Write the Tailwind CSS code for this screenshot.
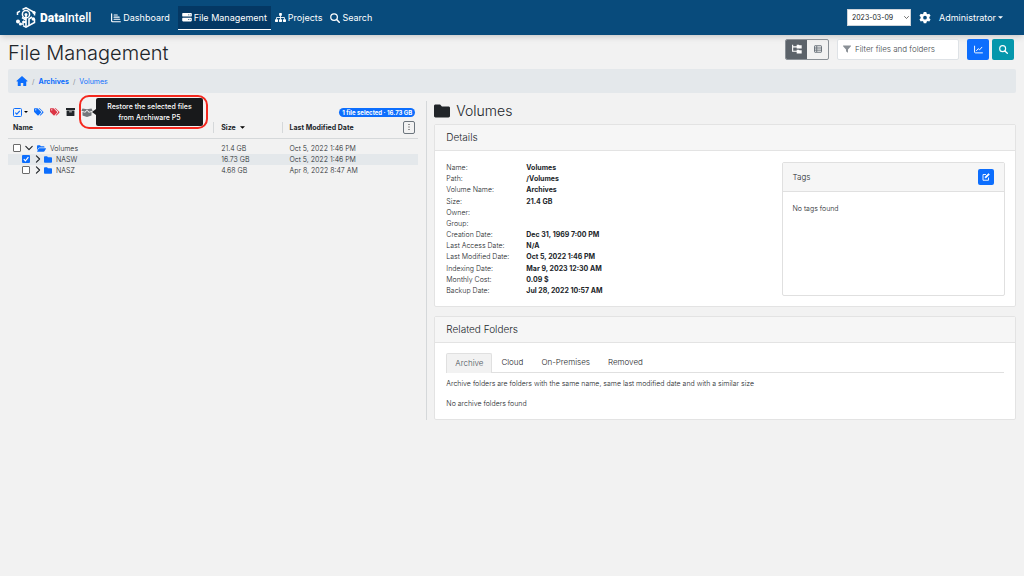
<!DOCTYPE html>
<html lang="en">
<head>
<meta charset="utf-8">
<title>File Management - DataIntell</title>
<script src="https://cdn.jsdelivr.net/npm/@tailwindcss/browser@4"></script>
</head>
<body class="min-h-screen bg-[#f2f2f2] font-['Inter',sans-serif] text-[7px] leading-[11px] font-light text-[#212529]">
<svg class="hidden">
  <symbol id="folder" viewBox="0 0 16 14"><path d="M1.5 0.5h4.6l1.8 1.9h6.6c.8 0 1.5.6 1.5 1.4v8.3c0 .8-.7 1.4-1.5 1.4h-13C.7 13.500 0 12.900 0 12.100V1.900C0 1.100.7.5 1.500.5z"/></symbol>
  <symbol id="folder-open" viewBox="0 0 18 14"><path d="M0 10.500V2C0 1.100.7.500 1.500.5H6l1.800 1.800h5.700c.8 0 1.500.7 1.500 1.500v1.200H5c-.9 0-1.700.5-2.200 1.200z"/><path d="M4.800 6.300h12.500c.6 0 .9.600.6 1.100l-3 5.200c-.3.500-.8.900-1.400.9H1c-.6 0-.9-.6-.6-1.100l3-5.200c.3-.5.800-.9 1.400-.9z"/></symbol>
  <symbol id="search" viewBox="0 0 16 16"><circle cx="6.500" cy="6.500" r="5.300" fill="none" stroke="currentColor" stroke-width="2"/><path d="M10.500 10.500l4.300 4.300" stroke="currentColor" stroke-width="2.400" stroke-linecap="round"/></symbol>
  <symbol id="tags" viewBox="0 0 20 16"><path d="M0 1.500v5.300c0 .4.200.8.400 1.100l6.600 6.600c.6.600 1.500.6 2.100 0l5-5c.6-.6.600-1.500 0-2.100L7.600.8C7.300.500 6.900.300 6.500.3h-5C.700.300 0 .700 0 1.500zM3.500 2.300a1.400 1.400 0 1 1 0 2.800 1.400 1.400 0 0 1 0-2.800z" fill-rule="evenodd"/><path d="M9 .3h1.800c.4 0 .8.200 1.100.5l6.700 6.600c.6.600.6 1.500 0 2.100l-5 5c-.6.600-1.500.600-2.100 0l-.2-.2 4.600-4.600c.9-.9.900-2.200 0-3.100z"/></symbol>
  <symbol id="chev" viewBox="0 0 10 10"><path d="M3 1l4 4-4 4" fill="none" stroke="currentColor" stroke-width="1.400" stroke-linecap="round" stroke-linejoin="round"/></symbol>
</svg>

<nav class="flex h-[35px] items-center bg-[#084b7c] pr-[21px] pl-4 text-[9px] font-normal text-white shadow-md" aria-label="Main">
  <a href="#" class="flex items-center gap-1">
    <svg class="h-[21px] w-5" viewBox="0 0 20 21" fill="none" stroke="white" stroke-width="1.500">
      <path d="M6.500 2.500L10 .800l8.500 4.700v3M18.500 12v3.500L10 20.200l-3-1.600M1.500 8V5.500L4 4.100M1.500 15.500v-2"/>
      <circle cx="10" cy="7.200" r="3.600"/>
      <path d="M10 8v11M10 13l-4-2.500M7 18v-4M13 18v-6l3-2M10 16l-3-2" stroke-width="1.600"/>
      <g fill="white" stroke="none"><circle cx="10" cy="7.500" r="1.500"/><circle cx="2" cy="14.500" r="2"/><circle cx="18" cy="5.500" r="1.600"/><circle cx="17.300" cy="12" r="1.800"/><circle cx="4.500" cy="17" r="1.600"/></g>
    </svg>
    <span class="font-['Roboto',sans-serif] text-[12px] leading-5 font-medium"><b class="font-black">Data</b>Intell</span>
  </a>
  <div class="ml-4 flex h-6 gap-1">
    <a href="#" class="flex items-center gap-0.5 px-1">
      <svg class="size-[10px]" viewBox="0 0 16 16" fill="none" stroke="currentColor" stroke-width="1.900" stroke-linecap="round"><path d="M1 1.500v11c0 .8.500 1.500 1.500 1.500H15M5 3.200h5M5 6.600h8M5 10h9"/></svg>
      Dashboard</a>
    <a href="#" class="flex items-center gap-0.5 border-b border-white bg-[#043864] px-1" aria-current="page">
      <svg class="h-[9px] w-[10px]" viewBox="0 0 16 15" fill="currentColor"><path fill-rule="evenodd" d="M1.500 0h13C15.300 0 16 .7 16 1.500v3c0 .8-.7 1.500-1.500 1.500h-13C.7 6 0 5.300 0 4.500v-3C0 .7.700 0 1.500 0zM10 2.300v1.400h1.400V2.300zM12.600 2.300v1.400H14V2.300zM1.500 8h13c.8 0 1.500.7 1.500 1.500v3c0 .8-.7 1.500-1.500 1.500h-13C.7 14 0 13.300 0 12.500v-3C0 8.700.700 8 1.500 8zM10 10.300v1.400h1.400v-1.400zM12.600 10.300v1.400H14v-1.400z"/></svg>
      File Management</a>
    <a href="#" class="flex items-center gap-0.5 pr-1">
      <svg class="h-[9px] w-[11px]" viewBox="0 0 20 16" fill="currentColor"><rect x="7.500" y="0" width="5" height="5" rx="1"/><rect x="0" y="11" width="5.500" height="5" rx="1"/><rect x="7.300" y="11" width="5.500" height="5" rx="1"/><rect x="14.500" y="11" width="5.500" height="5" rx="1"/><path d="M10 4v8M2.800 12V8h14.400v4" fill="none" stroke="currentColor" stroke-width="1.600"/></svg>
      Projects</a>
    <a href="#" class="flex items-center gap-0.5"><svg class="size-[10px]"><use href="#search"/></svg>Search</a>
  </div>
  <div class="ml-auto flex items-center">
    <div class="relative">
      <select aria-label="Snapshot date" class="block h-[17px] w-16 appearance-none border border-[#ced4da] bg-white pl-1 text-[7px] text-[#212529]"><option>2023-03-09</option></select>
      <svg class="pointer-events-none absolute top-1.5 right-0.5 size-[5px] rotate-90 text-[#333]"><use href="#chev"/></svg>
    </div>
    <button type="button" aria-label="Settings" class="ml-2">
      <svg class="block size-3" viewBox="0 0 16 16" fill="white"><path fill-rule="evenodd" d="M6.300 0h3.400l.5 2.100 1.300.8 2.200-.7 1.700 2.900-1.600 1.600v1.600l1.600 1.600-1.700 2.900-2.200-.7-1.300.8-.5 2.100H6.300l-.5-2.100-1.300-.8-2.200.7L.6 9.900l1.600-1.600V6.700L.6 5.100l1.700-2.900 2.200.7 1.300-.8zM8 5a2.500 2.500 0 1 0 0 5 2.500 2.500 0 0 0 0-5z"/></svg>
    </button>
    <button type="button" class="ml-2 flex items-center gap-0.5">Administrator<svg class="h-[3px] w-[5px]" viewBox="0 0 4 2" fill="white"><path d="M0 0h4L2 2z"/></svg></button>
  </div>
</nav>

<main class="px-2">
  <header class="flex h-[34px] items-center">
    <h1 class="pt-0.5 text-[20px] leading-6">File Management</h1>
    <div class="mr-0.5 mb-1.5 ml-auto flex h-[21px] items-stretch">
      <div class="flex w-11 overflow-hidden rounded-xs border border-[#8a9096]" role="group" aria-label="View">
        <button type="button" aria-label="Tree view" class="grid flex-1 place-items-center bg-[#5c636a] text-white"><svg class="size-[10px]" viewBox="0 0 16 16" fill="currentColor"><path d="M1 1v10.500h7M1 4.500h7" fill="none" stroke="currentColor" stroke-width="1.800"/><path d="M7.500 1H11l1 1h3.500v5h-8zM7.500 9H11l1 1h3.500v5h-8z"/></svg></button>
        <button type="button" aria-label="List view" class="grid flex-1 place-items-center text-[#6c757d]"><svg class="size-2" viewBox="0 0 16 16" fill="none" stroke="currentColor" stroke-width="2"><rect x="1" y="1.500" width="14" height="13" rx="1"/><path d="M1 6h14M1 10.300h14M5.500 2v12"/></svg></button>
      </div>
      <label class="ml-2 flex w-[122px] items-center gap-1 rounded-xs border border-[#dee2e6] bg-white px-[5px]">
        <svg class="size-2 shrink-0" viewBox="0 0 16 16" fill="#8a9096"><path d="M.8 1h14.400c.7 0 1 .8.6 1.300L10 9v5.300c0 .6-.6.900-1.100.6L6.500 13c-.3-.2-.5-.500-.5-.8V9L.2 2.300C-.2 1.800.1 1 .8 1z"/></svg>
        <input type="text" aria-label="Filter files and folders" placeholder="Filter files and folders" class="w-full min-w-0 bg-transparent text-[8px] outline-none placeholder:text-[#40464c]">
      </label>
      <button type="button" aria-label="Charts" class="ml-2 grid w-[22px] place-items-center rounded-xs bg-[#0d6efd] text-white"><svg class="size-[9px]" viewBox="0 0 16 16" fill="none" stroke="currentColor" stroke-width="1.700" stroke-linecap="round" stroke-linejoin="round"><path d="M1 2v10.500c0 .8.500 1.500 1.500 1.500H15M4.500 10l3-3.500 2.500 2L14 4"/></svg></button>
      <button type="button" aria-label="Search" class="ml-[3px] grid w-[22px] place-items-center rounded-xs bg-[#0597ac] text-white"><svg class="size-[9px]"><use href="#search"/></svg></button>
    </div>
  </header>

  <nav aria-label="Breadcrumb" class="flex h-6 items-center gap-1 rounded-xs bg-[#e4e8eb] px-2 text-[#0d6efd]">
    <a href="#" aria-label="Home"><svg class="block h-[10px] w-3" viewBox="0 0 18 16" fill="currentColor"><path d="M9 0l9 7.800-.7 1H15.800V15c0 .6-.4 1-1 1H11v-5H7v5H3.200c-.6 0-1-.4-1-1V8.800H.7L0 7.800z"/></svg></a>
    <span class="text-[#6c757d]">/</span><a href="#" class="font-bold">Archives</a><span class="text-[#6c757d]">/</span><a href="#" class="font-normal">Volumes</a>
  </nav>

  <div class="mt-2 flex">
    <section class="w-[41.5%] pt-[3px] pr-2" aria-label="Files">
      <div class="relative mb-px flex h-4 items-center pl-[5px]">
        <button type="button" aria-label="Select" class="flex items-center gap-0.5"><svg class="size-[9px]" viewBox="0 0 9 9" fill="none"><rect x=".5" y=".5" width="8" height="8" rx="1" stroke="#0d6efd"/><path d="M2.300 4.600l1.500 1.500 3-3.200" stroke="#0d6efd" stroke-width="1.200"/></svg><svg class="h-0.5 w-1" viewBox="0 0 4 2"><path d="M0 0h4L2 2z"/></svg></button>
        <button type="button" aria-label="Add tags" class="ml-1.5 text-[#0d6efd]"><svg class="block h-2 w-[10px]" fill="currentColor"><use href="#tags"/></svg></button>
        <button type="button" aria-label="Remove tags" class="ml-1.5 text-[#dc3545]"><svg class="block h-2 w-[10px]" fill="currentColor"><use href="#tags"/></svg></button>
        <button type="button" aria-label="Archive" class="ml-1.5"><svg class="block h-2 w-[9px]" viewBox="0 0 16 14" fill="#212529"><path fill-rule="evenodd" d="M.5 0h15c.3 0 .5.200.5.5V3.500H0V.5C0 .2.200 0 .5 0zM1 4.500h14V13c0 .6-.4 1-1 1H2c-.6 0-1-.4-1-1zM5.500 6v1.500h5V6z"/></svg></button>
        <button type="button" aria-label="Restore" aria-describedby="restore-tip" class="ml-1.5"><svg class="block h-[9px] w-3" viewBox="0 0 20 16" fill="#73777b"><path d="M2 1l8 1.300L18 1l2 4-6 1.800L10 3.200 6 6.800 0 5zM2 7l4.600 1.400L10 5l3.400 3.400L18 7v6.200L10 15.800 2 13.200z"/></svg></button>
        <div class="absolute -top-[9px] left-[71px] flex h-[34px] w-[129px] items-center rounded-[10px] border-2 border-[#f5281e] pr-[3px] pl-[11px]">
          <svg class="h-1.5 w-1 shrink-0" viewBox="0 0 4 6"><path d="M4 0v6L0 3z" fill="#18191b"/></svg>
          <div id="restore-tip" role="tooltip" class="flex-1 rounded-xs bg-[#18191b] py-[3px] text-center font-medium text-white">Restore the selected files<br>from Archiware P5</div>
        </div>
        <span class="mr-[3px] ml-auto rounded-full bg-[#0d6efd] px-[3px] text-[6px] leading-[9px] font-bold text-white">1 file selected · 16.73 GB</span>
      </div>
      <table class="w-full table-fixed border-collapse">
        <thead>
          <tr class="h-[17px] border-b border-[#d5d8da] text-left">
            <th class="w-1/2 pb-1 pl-[5px]">Name</th>
            <th class="w-1/6 pb-1"><div class="flex items-center gap-1 border-l border-[#d5d8da] pl-[7px]">Size<svg class="h-[3px] w-[5px]" viewBox="0 0 4 2"><path d="M0 0h4L2 2z"/></svg></div></th>
            <th class="w-1/3 pb-1"><div class="flex items-center justify-between border-l border-[#d5d8da] pr-[3px] pl-[7px]">Last Modified Date<button type="button" aria-label="Columns" class="-my-px grid h-[13px] w-3 place-items-center rounded-xs border border-[#6c757d]"><svg class="h-2 w-0.5" viewBox="0 0 2 8" fill="#333"><path d="M.5 1h1v1h-1zM.5 3.500h1v1h-1zM.5 6h1v1h-1z"/></svg></button></div></th>
          </tr>
        </thead>
        <tbody>
          <tr class="h-[15px]">
            <td class="pt-1 pl-[5px]"><div class="flex items-center"><input type="checkbox" aria-label="Select Volumes" class="size-2 appearance-none rounded-[1px] border border-[#6b6b6b] bg-white"><button type="button" aria-label="Collapse" class="ml-1"><svg class="block size-2 rotate-90"><use href="#chev"/></svg></button><svg class="mr-1 ml-1 h-[7px] w-[9px]" fill="#0d6efd"><use href="#folder-open"/></svg>Volumes</div></td>
            <td class="pt-1 pl-2">21.4 GB</td><td class="pt-1 pl-2">Oct 5, 2022 1:46 PM</td>
          </tr>
          <tr class="h-[11px] bg-[#e4e8eb]">
            <td class="pl-[14px]"><div class="flex items-center"><span class="relative flex"><input type="checkbox" checked aria-label="Select NASW" class="size-2 appearance-none rounded-[1px] bg-[#0d6efd]"><svg class="pointer-events-none absolute inset-0 size-2" viewBox="0 0 8 8"><path d="M1.800 4.200l1.600 1.600 3-3.600" fill="none" stroke="white" stroke-width="1.200"/></svg></span><button type="button" aria-label="Expand" class="ml-1"><svg class="block size-2"><use href="#chev"/></svg></button><svg class="mr-1 ml-0.5 h-[7px] w-2" fill="#0d6efd"><use href="#folder"/></svg>NASW</div></td>
            <td class="pl-2">16.73 GB</td><td class="pl-2">Oct 5, 2022 1:46 PM</td>
          </tr>
          <tr class="h-[11px]">
            <td class="pl-[14px]"><div class="flex items-center"><input type="checkbox" aria-label="Select NASZ" class="size-2 appearance-none rounded-[1px] border border-[#6b6b6b] bg-white"><button type="button" aria-label="Expand" class="ml-1"><svg class="block size-2"><use href="#chev"/></svg></button><svg class="mr-1 ml-0.5 h-[7px] w-2" fill="#0d6efd"><use href="#folder"/></svg>NASZ</div></td>
            <td class="pl-2">4.68 GB</td><td class="pl-2">Apr 8, 2022 8:47 AM</td>
          </tr>
        </tbody>
      </table>
    </section>

    <section class="flex-1 border-l border-[#d5d8da] pl-[7px]" aria-label="Folder details">
      <h2 class="flex h-[23px] items-center gap-1.5 pb-1 text-[14px]"><svg class="h-[14px] w-4" fill="#212529"><use href="#folder"/></svg>Volumes</h2>
      <article class="rounded-xs border border-[#e3e3e3] bg-white">
        <h3 class="flex h-[26px] items-center border-b border-[#e3e3e3] bg-[#f6f6f6] px-[11px] text-[10px]">Details</h3>
        <div class="flex p-[11px] pr-[10px] pb-[10px]">
          <dl class="grid flex-1 grid-cols-[80px_1fr] content-between">
            <dt>Name:</dt><dd class="font-bold">Volumes</dd>
            <dt>Path:</dt><dd class="font-bold">/Volumes</dd>
            <dt>Volume Name:</dt><dd class="font-bold">Archives</dd>
            <dt>Size:</dt><dd class="font-bold">21.4 GB</dd>
            <dt>Owner:</dt><dd></dd>
            <dt>Group:</dt><dd></dd>
            <dt>Creation Date:</dt><dd class="font-bold">Dec 31, 1969 7:00 PM</dd>
            <dt>Last Access Date:</dt><dd class="font-bold">N/A</dd>
            <dt>Last Modified Date:</dt><dd class="font-bold">Oct 5, 2022 1:46 PM</dd>
            <dt>Indexing Date:</dt><dd class="font-bold">Mar 9, 2023 12:30 AM</dd>
            <dt>Monthly Cost:</dt><dd class="font-bold">0.09 $</dd>
            <dt>Backup Date:</dt><dd class="font-bold">Jul 28, 2022 10:57 AM</dd>
          </dl>
          <div class="min-h-[134px] w-2/5 rounded-xs border border-[#e0e0e0]">
            <div class="flex h-[29px] items-center justify-between border-b border-[#e0e0e0] bg-[#f6f6f6] px-[10px]">
              <h4 class="text-[8px]">Tags</h4>
              <button type="button" aria-label="Edit tags" class="grid size-4 place-items-center rounded-xs bg-[#0d6efd]"><svg class="size-2" viewBox="0 0 16 16" fill="none" stroke="white" stroke-width="1.800"><path d="M8 3H2v11.500h11V9"/><path d="M6 10l.6-2.800L13 1l2 2-6.300 6.300z" fill="white" stroke-width="1"/></svg></button>
            </div>
            <p class="px-[10px] pt-[11px]">No tags found</p>
          </div>
        </div>
      </article>
      <article class="mt-[9px] rounded-xs border border-[#e3e3e3] bg-white">
        <h3 class="flex h-[26px] items-center border-b border-[#e3e3e3] bg-[#f6f6f6] px-[11px] text-[10px]">Related Folders</h3>
        <div class="px-[11px] pt-[10px] pb-[10px]">
          <div role="tablist" class="flex h-5 border-b border-[#e0e0e0] text-[8px]">
            <button type="button" role="tab" aria-selected="true" class="-mb-px rounded-t-xs border border-b-0 border-[#e0e0e0] bg-[#f2f2f2] px-2 text-[#495057]">Archive</button>
            <button type="button" role="tab" class="px-[9px]">Cloud</button>
            <button type="button" role="tab" class="px-[9px]">On-Premises</button>
            <button type="button" role="tab" class="px-[9px]">Removed</button>
          </div>
          <p class="pt-[5px]">Archive folders are folders with the same name, same last modified date and with a similar size</p>
          <p class="pt-[9px]">No archive folders found</p>
        </div>
      </article>
    </section>
  </div>
</main>
</body>
</html>
